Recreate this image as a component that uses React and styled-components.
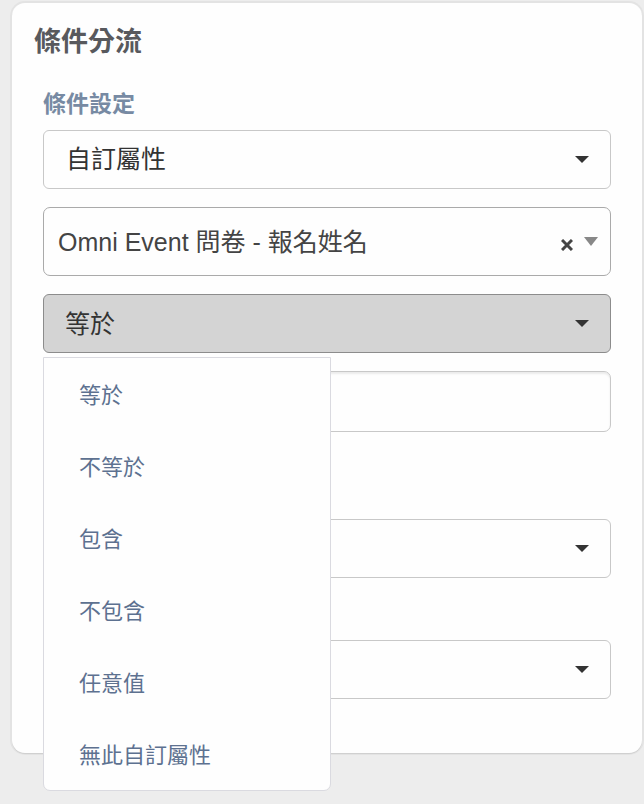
import React, { useState } from "react";
import styled, { createGlobalStyle } from "styled-components";

const GlobalStyle = createGlobalStyle`
  *, *::before, *::after { box-sizing: border-box; }
  body {
    margin: 0;
    background: #ededed;
    font-family: "Liberation Sans", "Noto Sans CJK TC", sans-serif;
  }
  button, input, select { font: inherit; }
`;

const Page = styled.main`
  padding: 3px 2px 50px 12px;
`;

const Card = styled.section`
  display: flex;
  flex-direction: column;
  gap: 28px;
  padding: 21px 31px 54px;
  background: #fefefe;
  border-radius: 13px;
  box-shadow: 0 1px 0 0 #d0d0d0, 0 0 0 2px #e3e3e3;
`;

const Title = styled.h1`
  margin: 0 -9px;
  color: #58595d;
  font-size: 27px;
  font-weight: 700;
  line-height: 36px;
`;

const Form = styled.form`
  display: flex;
  flex-direction: column;
  gap: 62px;
`;

const Group = styled.fieldset`
  display: flex;
  flex-direction: column;
  gap: 18px;
  min-width: 0;
  margin: 0;
  padding: 0;
  border: 0;
  margin-bottom: ${(p) => (p.$spaced ? "25px" : "0")};
`;

const Lead = styled.div`
  display: flex;
  flex-direction: column;
  gap: 10px;
`;

const Label = styled.label`
  color: #778aa3;
  font-size: 23px;
  font-weight: 700;
  line-height: 32px;
`;

const SelectFrame = styled.div`
  display: grid;
  align-items: center;

  & > * { grid-area: 1 / 1; }
  & > svg { justify-self: end; margin-right: 22px; pointer-events: none; }
`;

const Select = styled.select`
  appearance: none;
  width: 100%;
  height: 59px;
  padding: 0 48px 2px 22px;
  border: 1px solid #c8c8c8;
  border-radius: 6px;
  background: #fefefe;
  color: #333;
  font-size: 25px;
`;

const Combo = styled.div`
  display: flex;
  align-items: center;
  height: 69px;
  padding: 0 12px 0 14px;
  border: 1px solid #aaa;
  border-radius: 7px;
  background: #fefefe;
`;

const ComboSelect = styled.select`
  appearance: none;
  flex: 1;
  min-width: 0;
  height: 48px;
  padding: 0;
  border: 0;
  background: transparent;
  color: #444;
  font-size: 25px;
`;

const ClearButton = styled.button`
  display: flex;
  margin: 7px 11px 0 0;
  padding: 0;
  border: 0;
  background: none;
  cursor: pointer;
`;

const Dropdown = styled.div`
  position: relative;
`;

const Toggle = styled.button`
  display: flex;
  align-items: center;
  justify-content: space-between;
  width: 100%;
  height: 59px;
  padding: 0 21px;
  border: 1px solid #8c8c8c;
  border-radius: 6px;
  background: #d4d4d4;
  color: #333;
  font-size: 25px;
  cursor: pointer;
`;

const ToggleText = styled.span`
  padding-bottom: 4px;
`;

const Menu = styled.ul`
  position: absolute;
  top: 100%;
  left: 0;
  z-index: 1;
  width: 288px;
  margin: 4px 0 0;
  padding: 0;
  list-style: none;
  border: 1px solid #dadae0;
  border-radius: 0 0 7px 7px;
  background: #fefefe;
`;

const MenuItem = styled.button`
  display: flex;
  align-items: center;
  width: 100%;
  height: 72px;
  padding: 0 35px 2px;
  border: 0;
  background: none;
  color: #5d7190;
  font-size: 22px;
  cursor: pointer;
`;

const TextBox = styled.input`
  width: 100%;
  height: 61px;
  padding: 0 22px;
  border: 1px solid #c8c8c8;
  border-radius: 7px;
  background: #fefefe;
  box-shadow: inset 0 2px 2px rgba(0, 0, 0, 0.075);
  color: #555;
  font-size: 25px;
`;

function Caret({ color = "#333", height = 7 }) {
  return (
    <svg width="14" height={height} viewBox="0 0 14 7" preserveAspectRatio="none" aria-hidden="true">
      <path d="M0 0h14L7 7z" fill={color} />
    </svg>
  );
}

function SelectField({ id, label, options }) {
  return (
    <SelectFrame>
      <Select id={id} aria-label={label}>
        {options.map((option) => (
          <option key={option}>{option}</option>
        ))}
      </Select>
      <Caret />
    </SelectFrame>
  );
}

const OPERATORS = ["等於", "不等於", "包含", "不包含", "任意值", "無此自訂屬性"];

function OperatorDropdown() {
  const [open, setOpen] = useState(true);
  const [value, setValue] = useState(OPERATORS[0]);
  const choose = (operator) => {
    setValue(operator);
    setOpen(false);
  };

  return (
    <Dropdown>
      <Toggle type="button" aria-haspopup="true" aria-expanded={open} onClick={() => setOpen(!open)}>
        <ToggleText>{value}</ToggleText>
        <Caret />
      </Toggle>
      {open && (
        <Menu>
          {OPERATORS.map((operator) => (
            <li key={operator}>
              <MenuItem type="button" onClick={() => choose(operator)}>
                {operator}
              </MenuItem>
            </li>
          ))}
        </Menu>
      )}
    </Dropdown>
  );
}

export default function App() {
  const [attribute, setAttribute] = useState("Omni Event 問卷 - 報名姓名");

  return (
    <>
      <GlobalStyle />
      <Page>
        <Card>
          <Title>條件分流</Title>
          <Form>
            <Group $spaced>
              <Lead>
                <Label htmlFor="condition">條件設定</Label>
                <SelectField id="condition" options={["自訂屬性"]} />
              </Lead>
              <Combo>
                <ComboSelect
                  aria-label="自訂屬性"
                  value={attribute}
                  onChange={(event) => setAttribute(event.target.value)}
                >
                  <option value="" />
                  <option>Omni Event 問卷 - 報名姓名</option>
                </ComboSelect>
                <ClearButton type="button" aria-label="清除" onClick={() => setAttribute("")}>
                  <svg width="12" height="12" viewBox="0 0 12 12" aria-hidden="true">
                    <path d="M1 1l10 10M11 1L1 11" stroke="#444" strokeWidth="3" />
                  </svg>
                </ClearButton>
                <Caret color="#888" height={9} />
              </Combo>
              <OperatorDropdown />
              <TextBox type="text" aria-label="值" />
            </Group>
            <SelectField label="符合條件" options={[""]} />
            <SelectField label="不符合條件" options={[""]} />
          </Form>
        </Card>
      </Page>
    </>
  );
}
